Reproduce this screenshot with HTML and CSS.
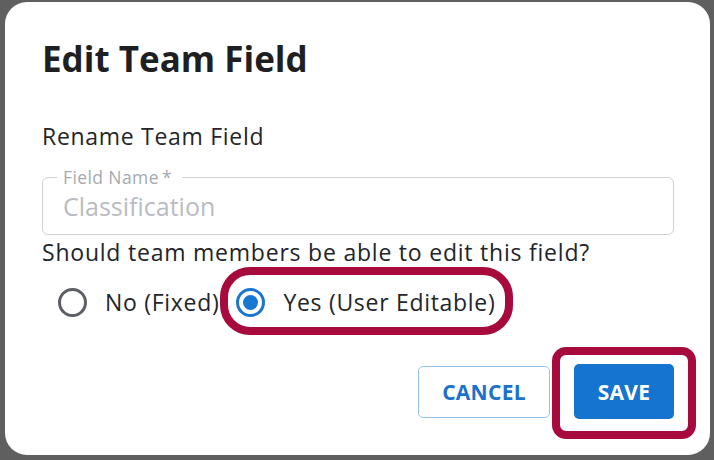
FILE: index.html
```html
<!DOCTYPE html>
<html>
<head>
<meta charset="utf-8">
<link rel="stylesheet" href="styles.css">
</head>
<body>
<div class="modal">
  <h1 class="title">Edit Team Field</h1>
  <div class="subtitle">Rename Team Field</div>
  <div class="field">
    <span class="field-label">Field Name<span class="req">*</span></span>
    <div class="field-input">Classification</div>
  </div>
  <div class="question">Should team members be able to edit this field?</div>
  <div class="options">
    <label class="option">
      <span class="radio"></span>
      <span class="option-text">No (Fixed)</span>
    </label>
    <label class="option option-selected">
      <span class="radio radio-on"><span class="radio-dot"></span></span>
      <span class="option-text">Yes (User Editable)</span>
      <span class="highlight highlight-pill"></span>
    </label>
  </div>
  <div class="actions">
    <button class="btn btn-outline">CANCEL</button>
    <div class="save-wrap">
      <button class="btn btn-primary">SAVE</button>
      <span class="highlight highlight-box"></span>
    </div>
  </div>
</div>
</body>
</html>
```

FILE: styles.css
```css
html, body {
  margin: 0;
  padding: 0;
  background: #5f5f5f;
  height: 100%;
  overflow: hidden;
}
body {
  padding: 2px 4px 5px 5px;
  box-sizing: border-box;
  font-family: "Open Sans", "Noto Sans", sans-serif;
  color: #1f2125;
}
.modal {
  background: #fff;
  border-radius: 22px;
  height: 453px;
  box-sizing: border-box;
  padding: 34px 36px 0 37px;
  display: flex;
  flex-direction: column;
}
.title {
  margin: 0;
  font-size: 35px;
  line-height: 46px;
  font-weight: 700;
  color: #1d1f23;
}
.subtitle {
  margin-top: 39px;
  font-size: 23px;
  line-height: 30px;
  letter-spacing: 0.7px;
  color: #24262b;
}
.field {
  position: relative;
  margin-top: 26px;
  height: 58px;
  box-sizing: border-box;
  border: 1px solid #d0d2d6;
  border-radius: 6px;
  padding: 0 20px;
  display: flex;
  align-items: center;
}
.field-label {
  position: absolute;
  left: 14px;
  top: -11px;
  padding: 0 10px 0 6px;
  background: #fff;
  font-size: 17.5px;
  line-height: 20px;
  letter-spacing: 0.4px;
  color: #a6a9b0;
}
.req {
  margin-left: 3px;
}
.field-input {
  font-size: 25px;
  line-height: 30px;
  color: #b9bcc3;
}
.question {
  margin-top: 2px;
  font-size: 23px;
  line-height: 30px;
  letter-spacing: 0.78px;
  color: #22242a;
}
.options {
  display: flex;
  align-items: center;
  margin-top: 10px;
  margin-left: 16px;
}
.option {
  position: relative;
  display: flex;
  align-items: center;
  height: 50px;
}
.option-selected {
  margin-left: 17px;
}
.radio {
  width: 29px;
  height: 29px;
  box-sizing: border-box;
  border: 3px solid #5d5f66;
  border-radius: 50%;
  display: flex;
  align-items: center;
  justify-content: center;
}
.radio-on {
  border-color: #1976d2;
}
.radio-dot {
  width: 15px;
  height: 15px;
  border-radius: 50%;
  background: #1976d2;
}
.option-text {
  margin-left: 18px;
  font-size: 23px;
  line-height: 30px;
  letter-spacing: 0.7px;
  color: #23252a;
}
.highlight {
  position: absolute;
  border: 8px solid #a70a3c;
  pointer-events: none;
}
.highlight-pill {
  left: -16px;
  right: -18px;
  top: -10px;
  bottom: -8px;
  border-radius: 30px;
}
.actions {
  display: flex;
  justify-content: flex-end;
  align-items: center;
  gap: 24px;
  margin-top: 37px;
}
.btn {
  font-family: "Open Sans", "Noto Sans", sans-serif;
  font-weight: 700;
  font-size: 21px;
  letter-spacing: 0.3px;
  border-radius: 5px;
  cursor: pointer;
  padding: 0;
}
.btn-outline {
  width: 132px;
  height: 52px;
  background: #fff;
  border: 1px solid #96c3ef;
  color: #1a73c9;
}
.save-wrap {
  position: relative;
  display: flex;
}
.btn-primary {
  width: 100px;
  height: 55px;
  background: #1574cf;
  border: none;
  color: #fff;
}
.highlight-box {
  left: -22px;
  right: -22px;
  top: -17px;
  bottom: -20px;
  border-radius: 14px;
}
```
